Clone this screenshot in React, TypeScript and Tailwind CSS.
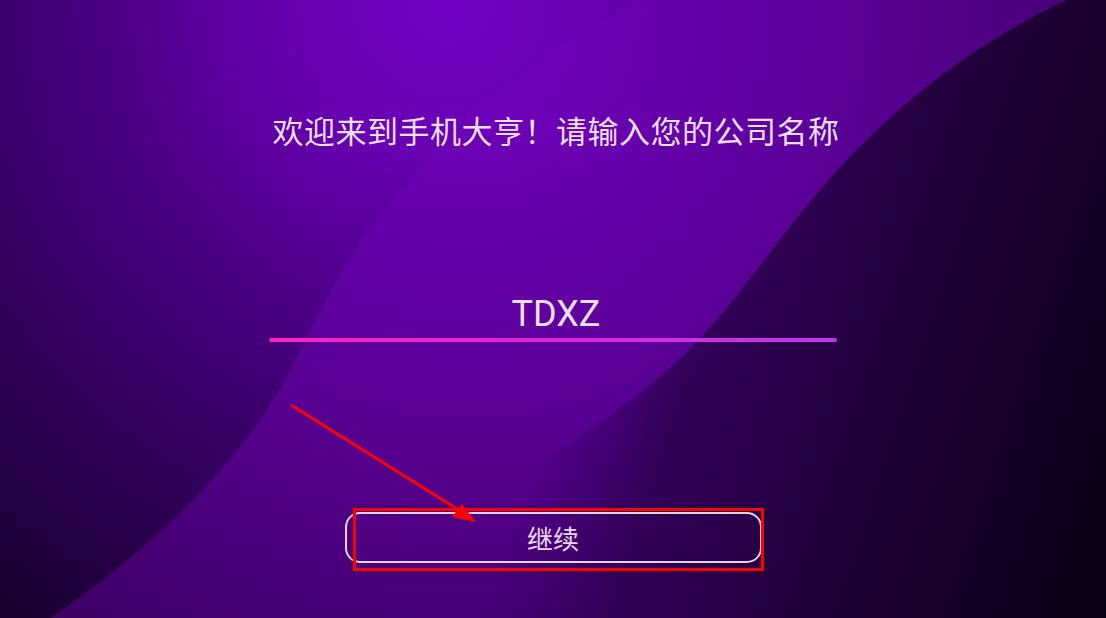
import React from "react";

// background wave drawn as svg
const Waves = () => (
  <svg className="absolute inset-0 h-full w-full" viewBox="0 0 1106 618" preserveAspectRatio="none">
    <defs>
      <radialGradient id="base" cx="450" cy="0" r="780" gradientUnits="userSpaceOnUse">
        <stop offset="0" stopColor="#7400c4" />
        <stop offset="0.2" stopColor="#6800b2" />
        <stop offset="0.5" stopColor="#44007a" />
        <stop offset="1" stopColor="#16002a" />
      </radialGradient>
      <radialGradient id="band" cx="470" cy="20" r="720" gradientUnits="userSpaceOnUse">
        <stop offset="0" stopColor="#7400c4" />
        <stop offset="0.5" stopColor="#5c009a" />
        <stop offset="1" stopColor="#3e0066" />
      </radialGradient>
      <linearGradient id="dark" x1="540" y1="430" x2="1106" y2="618" gradientUnits="userSpaceOnUse">
        <stop offset="0" stopColor="#3a0062" stopOpacity="0" />
        <stop offset="0.2" stopColor="#33005a" stopOpacity="1" />
        <stop offset="0.5" stopColor="#22003c" />
        <stop offset="1" stopColor="#0a0013" />
      </linearGradient>
    </defs>
    <rect width="1106" height="618" fill="url(#base)" />
    <path
      d="M50 618 C 150 550 220 480 267 410 C 300 360 320 300 367 233 C 420 160 520 60 640 0 L 1106 0 L 1106 618 Z"
      fill="url(#band)"
    />
    <path
      d="M1067 0 C 960 50 880 120 820 190 C 760 260 720 330 650 385 C 600 425 540 460 470 520 C 430 555 400 590 380 618 L 1106 618 L 1106 0 Z"
      fill="url(#dark)"
    />
  </svg>
);

const App = () => (
  <div className="relative h-[618px] w-full overflow-hidden bg-[#3a0062] font-['Noto_Sans_CJK_SC',sans-serif]">
    <Waves />

    <div className="relative flex flex-col items-center pt-[108px]">
      <h1 className="ml-[6px] text-[31px] leading-[44px] font-normal tracking-[0.5px] text-[#ecdff3]">
        欢迎来到手机大亨！请输入您的公司名称
      </h1>

      <div className="mt-[140px] flex w-[568px] flex-col">
        <div className="ml-[6px] text-center font-['Roboto',sans-serif] text-[36px] leading-[44px] text-[#ecdff3]">
          TDXZ
        </div>
        <div className="mt-[2px] h-[4px] rounded-full bg-gradient-to-r from-[#ff1fbf] via-[#de22da] to-[#bf35f3]" />
      </div>

      <button className="mt-[170px] flex h-[51px] w-[417px] items-center justify-center rounded-[15px] border-2 border-[#ddd6e4] text-[26px] text-[#e6d8ef]">
        继续
      </button>
    </div>

    {/* annotations */}
    <div className="absolute left-[353px] top-[508px] h-[63px] w-[411px] border-[3px] border-[#ff0000] shadow-[0_0_4px_rgba(0,0,0,0.4)]" />
    <svg className="absolute left-0 top-0 h-[618px] w-[1106px] pointer-events-none" viewBox="0 0 1106 618">
      <line x1="291" y1="405" x2="462" y2="512" stroke="#ff0000" strokeWidth="3" />
      <polygon points="476,522 452,517 462,504" fill="#ff0000" />
    </svg>
  </div>
);

export default App;
